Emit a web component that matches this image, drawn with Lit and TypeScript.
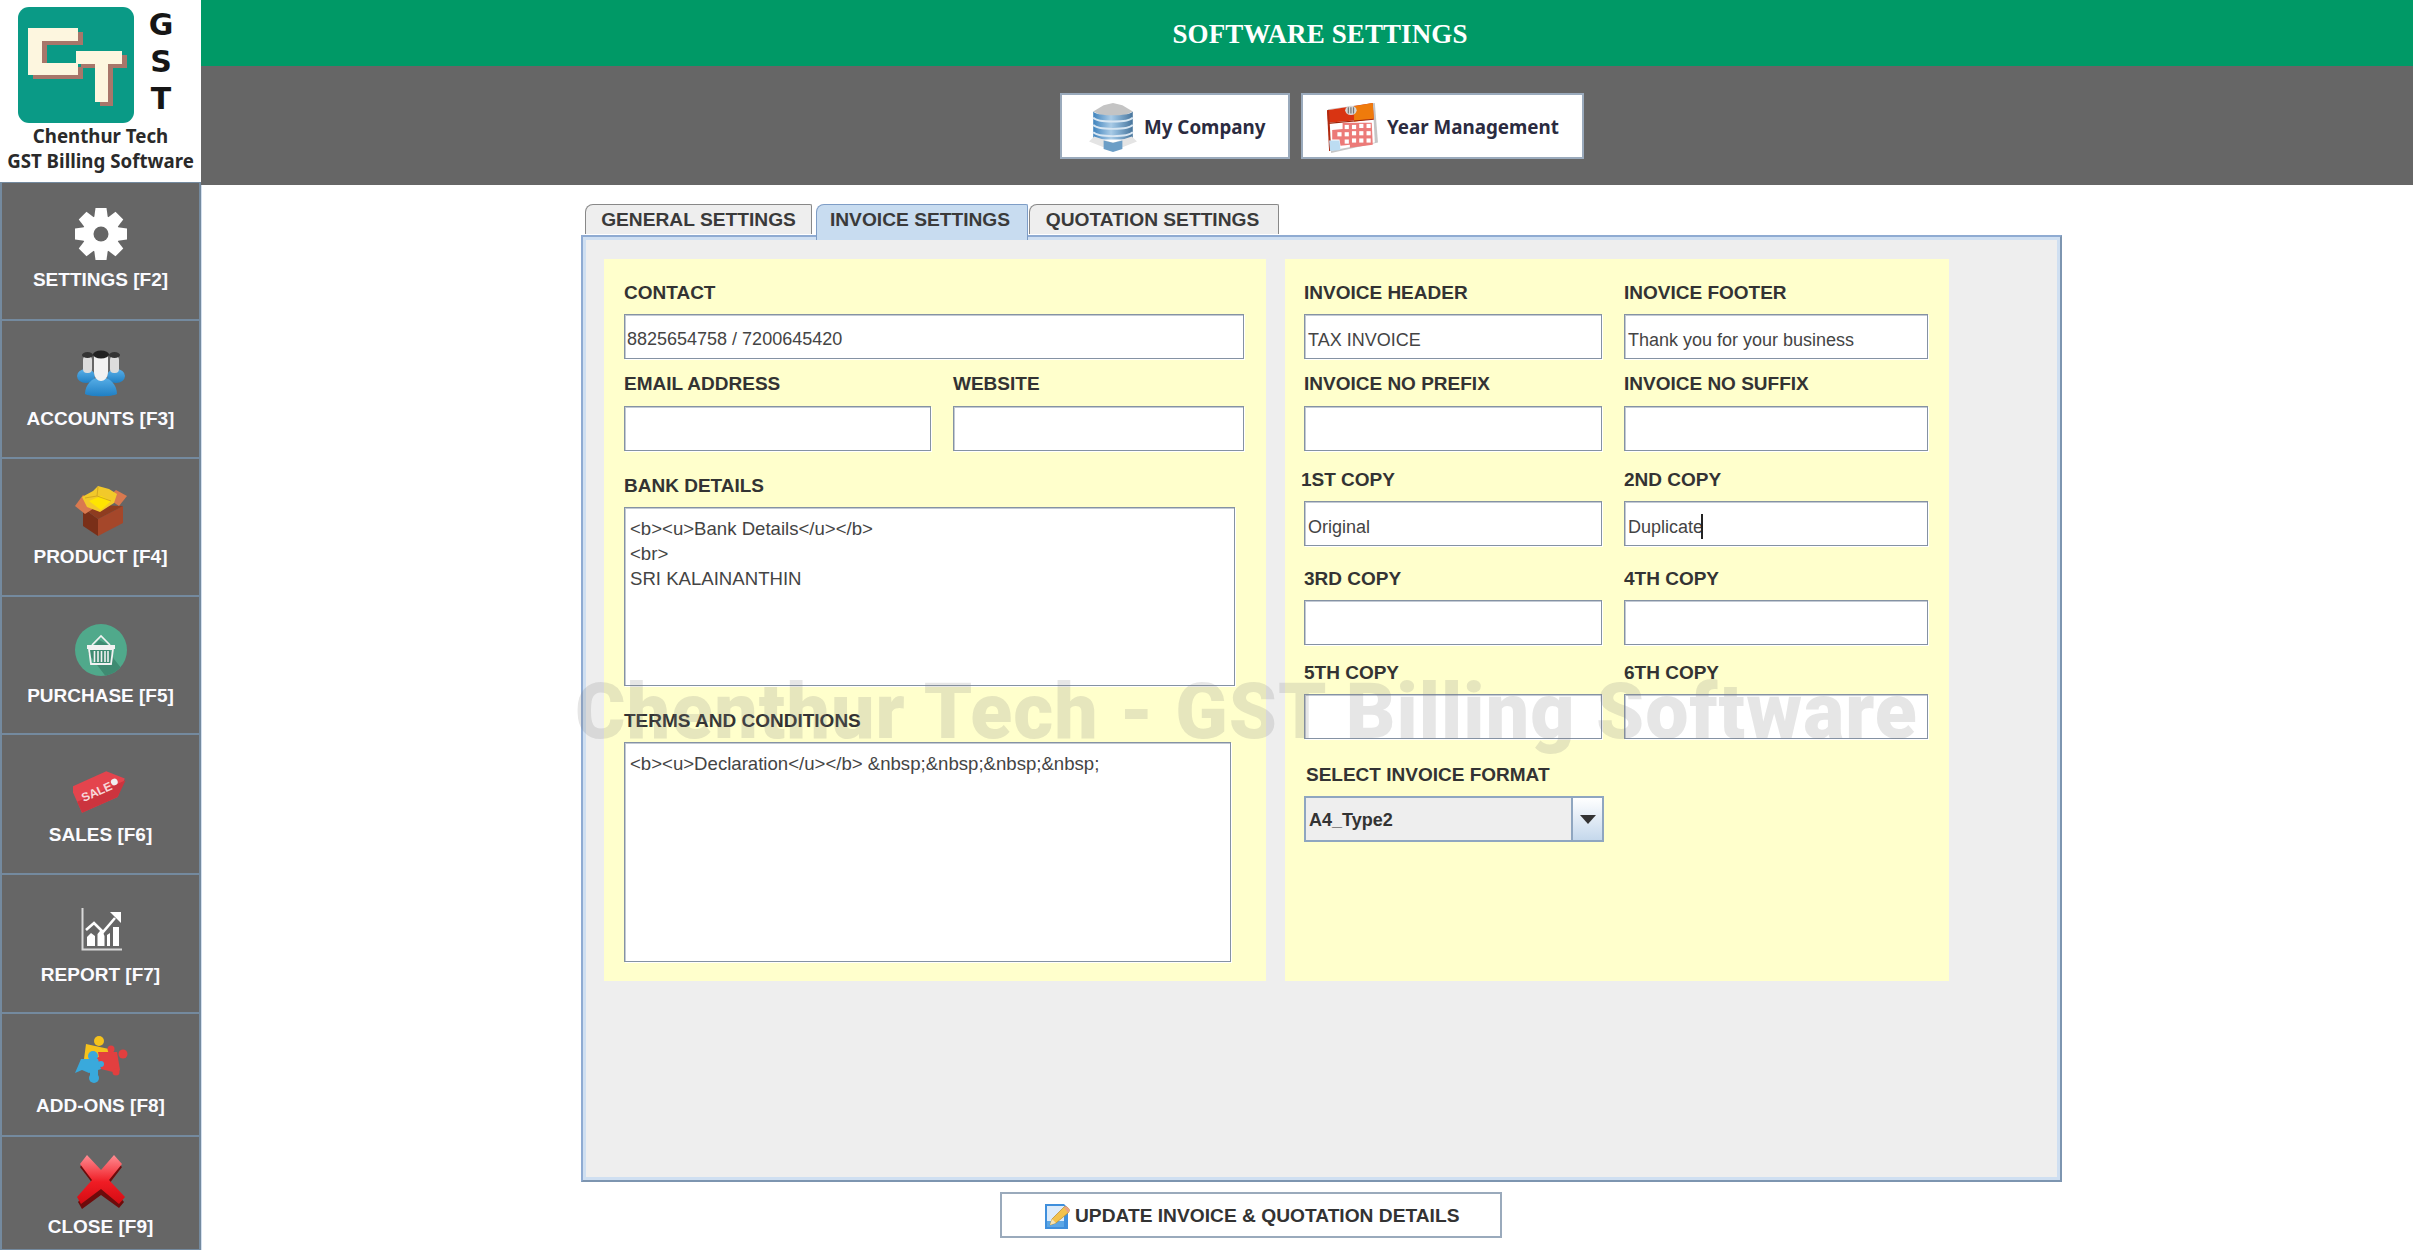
import { LitElement, html, css, svg } from "lit";
import { customElement } from "lit/decorators.js";

const gearTeeth = [0, 45, 90, 135, 180, 225, 270, 315];
const icons: Record<string, unknown> = {
  gear: svg`<g fill="#fff">${gearTeeth.map((a) => svg`<path transform="rotate(${a} 28 28)" d="M22.5 2h11l1.500 11h-14z"/>`)}<circle cx="28" cy="28" r="18.500"/></g><circle cx="28" cy="28" r="7.500" fill="#666"/>`,
  accounts: svg`<defs><linearGradient id="acb" x1="0" y1="0" x2="0" y2="1"><stop offset="0" stop-color="#5ab0e8"/><stop offset="1" stop-color="#1f7fc4"/></linearGradient></defs>
    <ellipse cx="13" cy="31" rx="9" ry="7" fill="url(#acb)"/><ellipse cx="43" cy="31" rx="9" ry="7" fill="url(#acb)"/>
    <rect x="10" y="11" width="9" height="17" rx="4" fill="#dcdcdc"/><rect x="37" y="11" width="9" height="17" rx="4" fill="#dcdcdc"/>
    <ellipse cx="14.500" cy="10" rx="5.500" ry="3" fill="#333"/><ellipse cx="41.500" cy="10" rx="5.500" ry="3" fill="#333"/>
    <path d="M12 49c0-9 7-17 16-17s16 8 16 17c-4 3-28 3-32 0z" fill="url(#acb)"/>
    <path d="M21 11h14v16c0 6-4 9-7 9s-7-3-7-9z" fill="#f2f2f2"/>
    <ellipse cx="28" cy="9.500" rx="8" ry="4" fill="#222"/>`,
  product: svg`<path d="M10 25L25 36 25 53 10 43z" fill="#7a2f18"/><path d="M25 36L50 23 50 40 25 53z" fill="#a5472a"/>
    <path d="M26 22L50 23 25 36 10 25z" fill="#8e3c20"/>
    <path d="M2 23L10 12 26 22 12 31z" fill="#d9794f"/><path d="M34 15L43 7 54 13 46 23z" fill="#d9794f"/>
    <path d="M9 14L20 8 25 3 36 6 44 11 41 20 27 29 14 24z" fill="#f2c92a"/><path d="M16 18L28 13 38 18 28 27z" fill="#ffe500"/>
    <path d="M25 4l-1 9M12 15l12-2 14 5" stroke="#d4a820" stroke-width="1" fill="none"/>`,
  purchase: svg`<clipPath id="pc"><circle cx="28" cy="28" r="26"/></clipPath><circle cx="28" cy="28" r="26" fill="#50a98b"/>
    <path d="M15 31l11-13 8 4 7 15 15 19H34z" fill="#3f8b72" clip-path="url(#pc)"/>
    <path d="M19 23l9-9 9 9" fill="none" stroke="#f2f2f2" stroke-width="1.600"/><path d="M14 23h28v4h-28z" fill="#f2f2f2"/>
    <path d="M16 27h24l-2 15H18z" fill="none" stroke="#f2f2f2" stroke-width="1.800"/><path d="M21.500 29v11M25 29v11M28.500 29v11M32 29v11M35 29v11" stroke="#f2f2f2" stroke-width="1.600"/>`,
  sales: svg`<g transform="rotate(-24 28 28)"><path d="M1 14h39l14 14-14 14H1z" fill="#e4444d"/><path d="M1 30h53l-14 12H1z" fill="#cc343e"/><circle cx="43" cy="27" r="3.400" fill="#efefef"/><text x="7" y="33" class="sale">SALE</text></g>`,
  report: svg`<path d="M9.500 7v41.500H49" fill="none" stroke="#d8d8d8" stroke-width="2"/>
    <path d="M14 45v-9l4-4 4 3v10zM24.500 45V33l4-5 3 7v10zM34 45V34l3-2v13zM40 45V26h6v19z" fill="#fff"/>
    <path d="M13 29l8-7 9 9 12-14" fill="none" stroke="#fff" stroke-width="2.600"/><path d="M37 11h11v11z" fill="#fff"/>`,
  addons: svg`<g fill="#f5c21c"><path d="M11 27L13 12 36 17 32 34 21 30z"/><circle cx="26" cy="9" r="5"/></g>
    <g fill="#e23f3f"><path d="M25 20L44 20 47 38 44 41 28 37z"/><circle cx="50" cy="22" r="4.500"/><circle cx="38" cy="17" r="3.500"/><circle cx="43" cy="40" r="3.500"/><circle cx="25" cy="28" r="3" /></g>
    <g fill="#39a9dc"><path d="M2 41L8 27 25 27 28 37 16 41 9 38z"/><circle cx="20" cy="24" r="5"/><circle cx="21" cy="46" r="5"/><path d="M17 38h8v5h-8z"/><circle cx="28" cy="32" r="3"/></g>`,
  close: svg`<defs><linearGradient id="cx" x1="0" y1="0" x2="0" y2="1"><stop offset="0" stop-color="#ff8d93"/><stop offset=".55" stop-color="#f01c24"/><stop offset="1" stop-color="#d40b12"/></linearGradient></defs>
    <path d="M5 47l15-18L7 12l8-9 13 15L40 3l9 9-13 17 15 18-5 6-18-13-19 14z" fill="#6e0b0b" transform="translate(0 2)"/>
    <path d="M4 44l15-17L7 11l7-9 14 15L41 2l8 9-13 16 16 17-6 7-18-15-20 15z" fill="url(#cx)"/>`,
  building: svg`<defs><linearGradient id="bd" x1="0" y1="0" x2="1" y2="0"><stop offset="0" stop-color="#3f83bd"/><stop offset=".45" stop-color="#a9cbe6"/><stop offset=".6" stop-color="#8ab4d6"/><stop offset="1" stop-color="#47749b"/></linearGradient></defs>
    <path d="M4 9L14 3 23 1 32 3 42 9 32 14 14 14z" fill="#c4c4c4"/><path d="M4 9c4 5 34 5 38 0v27H4z" fill="url(#bd)"/>
    <path d="M4 15c4 5 34 5 38 0M4 22c4 5 34 5 38 0M4 29c4 5 34 5 38 0" stroke="#d8e6f2" stroke-width="1.800" fill="none"/>
    <path d="M0 38l5-5 18 6 18-6 5 5-23 9z" fill="#e4e4e4"/><path d="M14 37l9 2 9-2v8l-9 3-9-3z" fill="#6c9ec6"/>`,
  calendar: svg`<path d="M1 8l45-6 3 38-45 10z" fill="#8c8c8c" opacity=".5"/><path d="M0 9l44-7 2 38L2 48z" fill="#fff"/>
    <path d="M0 9l44-7 1 15L1 21z" fill="#d93412"/><path d="M26 5l18-3 1 15-19 3z" fill="#ef7b0c"/>
    <path d="M1 21l44-4v1L1 22z" fill="#9e2208"/><path d="M0 9L2 48 4 48 2 9z" fill="#b02a10"/>
    <path d="M5 28l10-1v-6h28l1 21-22 3v-3l-9 1-1-6H5z" fill="#ec7a78"/>
    <g fill="#fff"><rect x="17" y="23" width="4" height="4"/><rect x="24" y="23" width="4" height="4"/><rect x="31" y="22" width="4" height="4"/><rect x="38" y="22" width="4" height="4"/><rect x="10" y="30" width="4" height="4"/><rect x="17" y="30" width="4" height="4"/><rect x="24" y="29" width="4" height="4"/><rect x="31" y="29" width="4" height="4"/><rect x="38" y="29" width="4" height="4"/><rect x="17" y="37" width="4" height="4"/><rect x="24" y="36" width="4" height="4"/><rect x="31" y="36" width="4" height="4"/><rect x="38" y="36" width="4" height="4"/></g>
    <path d="M2 38l10 0 1 9-10 1z" fill="#bcdcf2"/>
    <ellipse cx="23" cy="9" rx="5.500" ry="4.500" fill="#d8d8d8"/><path d="M20.500 6v6M23 6v6M25.500 6v6" stroke="#777" stroke-width="1.200"/>`,
  pencil: svg`<path d="M1 1h19l4 4v21H1z" fill="#3f8fdc"/><path d="M3 3h17v21H3z" fill="#dcebfa"/><path d="M3 18h17v6H3z" fill="#5ca7e6"/>
    <path d="M6 22l2-6L20 4c1-1 4 0 5 2 1 1 0 3-1 4L12 20z" fill="#f2c24c" stroke="#b98a2a" stroke-width=".7"/><path d="M6 22l2-6 4 4z" fill="#f5e3b5"/><path d="M20 4c1-1 4 0 5 2 1 1 0 3-1 4z" fill="#e8a088"/>`,
};

const nav = [
  { icon: "gear", label: "SETTINGS [F2]", pad: "p23" },
  { icon: "accounts", label: "ACCOUNTS [F3]", pad: "p24" },
  { icon: "product", label: "PRODUCT [F4]", pad: "p24" },
  { icon: "purchase", label: "PURCHASE [F5]", pad: "p25" },
  { icon: "sales", label: "SALES [F6]", pad: "p26" },
  { icon: "report", label: "REPORT [F7]", pad: "p26" },
  { icon: "addons", label: "ADD-ONS [F8]", pad: "p18" },
  { icon: "close", label: "CLOSE [F9]", pad: "p16" },
];

const rightRows: { label: string; value?: string; caret?: boolean; cls?: string; top: string }[][] = [
  [{ label: "INVOICE HEADER", value: "TAX INVOICE", top: "t0" }, { label: "INOVICE FOOTER", value: "Thank you for your business", top: "t0" }],
  [{ label: "INVOICE NO PREFIX", top: "t14" }, { label: "INVOICE NO SUFFIX", top: "t14" }],
  [{ label: "1ST COPY", value: "Original", cls: "nudge", top: "t18" }, { label: "2ND COPY", value: "Duplicate", caret: true, top: "t18" }],
  [{ label: "3RD COPY", top: "t22" }, { label: "4TH COPY", top: "t22" }],
  [{ label: "5TH COPY", top: "t17" }, { label: "6TH COPY", top: "t17" }],
];

@customElement("app-root")
export class AppRoot extends LitElement {
  static styles = css`
    :host { display: block; position: relative; width: 100%; height: 1250px; overflow: hidden; background: #fff; font-family: "Liberation Sans", Arial, sans-serif; color: #333; }
    .app { display: grid; grid-template-columns: 201px 1fr; height: 100%; }
    .side { display: grid; grid-template-rows: 182px 138px 138px 138px 138px 140px 139px 123px 114px; }
    .logo { position: relative; display: grid; grid-template-columns: 134px 1fr; grid-template-rows: 124px 1fr; background: #fff; }
    .mark { margin: 7px 0 0 18px; width: 116px; height: 116px; }
    .gst { display: flex; flex-direction: column; align-items: center; padding: 6px 0 0 13px; width: 28px; font: 700 30px/37px "DejaVu Sans", sans-serif; color: #161616; }
    .brand { grid-column: 1 / 3; text-align: center; font: 700 18.700px/24.500px "Noto Sans", sans-serif; color: #2a2a2a; }
    .nav { display: flex; flex-direction: column; align-items: center; background: #666; border: 2px solid #748a9f; border-top-width: 1px; border-bottom-width: 1px; color: #fff; box-shadow: 1px 0 0 #d4e0ee; }
    .nav svg { display: block; width: 56px; height: 56px; flex: none; }
    .nav span { margin-top: 7px; font-weight: 700; font-size: 19px; line-height: 22px; white-space: nowrap; color: #fbfbff; }
    .p16 { padding-top: 16px; } .p18 { padding-top: 18px; } .p23 { padding-top: 23px; } .p24 { padding-top: 24px; } .p25 { padding-top: 25px; } .p26 { padding-top: 26px; }
    .sale { font: 700 12px "Liberation Sans", sans-serif; fill: #f7d8da; }
    .main { display: flex; flex-direction: column; min-width: 0; }
    .title { height: 66px; box-sizing: border-box; padding: 3px 0 0 26px; background: #009966; display: flex; align-items: center; justify-content: center; color: #fff; font: 700 27px "Liberation Serif", serif; letter-spacing: 0.100px; }
    .bar { height: 119px; background: #666; display: flex; justify-content: center; gap: 11px; padding: 27px 0 0 30px; box-sizing: border-box; }
    .tbtn { height: 66px; box-sizing: border-box; padding-top: 2px; background: #fff; border: 2px solid #9aaabc; display: flex; align-items: center; font: 700 18.800px "Noto Sans", sans-serif; color: #2b2b40; }
    .b1 { width: 230px; padding-left: 27px; gap: 7px; } .b2 { width: 283px; padding-left: 24px; gap: 8px; }
    .b1 svg { width: 48px; height: 50px; } .b2 svg { width: 52px; height: 52px; }
    .content { flex: 1; padding: 19px 0 0 380px; position: relative; }
    .tabs { display: flex; height: 31px; padding-left: 4px; position: relative; z-index: 1; }
    .tab { box-sizing: border-box; height: 30px; background: #eeeeee; border: 1px solid #888; border-bottom: 0; border-radius: 8px 2px 0 0; display: flex; align-items: center; justify-content: center; font-weight: 700; font-size: 19.200px; color: #3a3a3a; }
    .tab.g { width: 227px; } .tab.i { width: 212px; margin-left: 4px; height: 36px; background: #c8dcf0; border-color: #7e9dc6; padding: 0 4px 6px 0; } .tab.q { width: 250px; margin-left: 1px; padding-right: 3px; }
    .panel { width: 1481px; height: 947px; box-sizing: border-box; background: #eeeeee; border: 2px solid #8fabd2; border-right-color: #7d95b0; border-bottom-color: #7d95b0; box-shadow: inset 0 0 0 3px #cfdff1; padding: 22px 0 0 21px; display: flex; gap: 19px; align-items: flex-start; }
    .yellow { height: 722px; box-sizing: border-box; background: #ffffcc; padding: 23px 0 0 20px; }
    .left { width: 662px; }
    .right { width: 664px; padding-left: 19px; }
    .field { display: flex; flex-direction: column; }
    .lab { height: 22px; line-height: 22px; font-weight: 700; font-size: 19px; color: #333; white-space: nowrap; }
    .box { box-sizing: border-box; height: 45px; margin-top: 10px; background: #fff; border: 1px solid #8592a3; box-shadow: inset 1px 1px 0 #c3cad4, 1px 1px 0 #fff; font-size: 18px; line-height: 22px; color: #444; display: flex; align-items: center; padding: 5px 0 0 2px; white-space: pre; }
    .row { display: flex; gap: 22px; }
    .t0 { margin-top: 0; } .t14 { margin-top: 14px; } .t17 { margin-top: 17px; } .t18 { margin-top: 18px; } .t22 { margin-top: 22px; } .t24 { margin-top: 24px; } .t25 { margin-top: 25px; }
    .w620 { width: 620px; } .w306 { width: 307px; } .w292 { width: 291px; }
    .mail .box { margin-top: 11px; }
    .area { box-sizing: border-box; margin-top: 10px; background: #fff; border: 1px solid #8592a3; box-shadow: inset 1px 1px 0 #c3cad4, 1px 1px 0 #fff; font-size: 18.600px; line-height: 25px; color: #444; padding: 8px 0 0 5px; white-space: pre; }
    .a1 { width: 611px; height: 179px; } .a2 { width: 607px; height: 220px; }
    .c1 { width: 298px; } .c2 { width: 304px; }
    .right .box { padding: 6px 0 0 3px; }
    .nudge .lab { margin-left: -3px; }
    .r2 .box { margin-top: 11px; }
    .caret { display: inline-block; width: 2px; height: 25px; background: #222; margin-left: -2px; align-self: center; }
    .combo { box-sizing: border-box; width: 300px; height: 46px; margin-top: 10px; display: flex; background: #eeeeee; border: 2px solid #8fa6c0; }
    .cval { flex: 1; font-weight: 700; font-size: 18px; color: #333; display: flex; align-items: center; padding: 3px 0 0 3px; border-right: 2px solid #8fa6c0; }
    .cbtn { width: 29px; background: linear-gradient(#ffffff, #c5d8ec); display: flex; align-items: center; justify-content: center; }
    .tri { width: 0; height: 0; border-left: 8px solid transparent; border-right: 8px solid transparent; border-top: 9px solid #333; }
    .sellab { margin-left: 2px; }
    .foot { display: flex; margin: 10px 0 0 419px; }
    .update { box-sizing: border-box; width: 502px; height: 46px; background: #fff; border: 2px solid #9aaabc; display: flex; align-items: center; padding: 2px 0 0 42px; gap: 5px; font-weight: 700; font-size: 19.200px; color: #333; white-space: nowrap; }
    .update svg { width: 26px; height: 27px; flex: none; }
    .wm { position: absolute; left: 575px; top: 668px; font-family: Roboto, sans-serif; font-weight: 900; font-size: 77px; letter-spacing: 1.100px; line-height: 88px; color: rgba(128, 128, 128, 0.2); white-space: nowrap; pointer-events: none; z-index: 5; }
  `;

  private field(f: { label: string; value?: string; caret?: boolean; cls?: string; top: string }, col: string) {
    return html`<div class="field ${col} ${f.cls ?? ""}">
      <div class="lab">${f.label}</div>
      <div class="box">${f.value ?? ""}${f.caret ? html`<i class="caret"></i>` : ""}</div>
    </div>`;
  }

  render() {
    return html`
      <div class="app">
        <aside class="side">
          <div class="logo">
            <svg class="mark" viewBox="0 0 116 116">
              <rect width="116" height="116" rx="11" fill="#0a9a86"/>
              <g fill="#a8766a"><rect x="15" y="25" width="50" height="13"/><rect x="15" y="25" width="14" height="47"/><rect x="15" y="60" width="50" height="12"/><rect x="63" y="48" width="46" height="13"/><rect x="82" y="48" width="13" height="51"/></g>
              <g fill="#fdf6df"><rect x="10" y="21" width="50" height="13"/><rect x="10" y="21" width="14" height="47"/><rect x="10" y="56" width="50" height="12"/><rect x="58" y="44" width="46" height="13"/><rect x="77" y="44" width="13" height="51"/></g>
            </svg>
            <div class="gst"><span>G</span><span>S</span><span>T</span></div>
            <div class="brand">Chenthur Tech<br />GST Billing Software</div>
          </div>
          ${nav.map((n) => html`<div class="nav ${n.pad}"><svg viewBox="0 0 56 56">${icons[n.icon]}</svg><span>${n.label}</span></div>`)}
        </aside>
        <main class="main">
          <div class="title">SOFTWARE SETTINGS</div>
          <div class="bar">
            <div class="tbtn b1"><svg viewBox="0 0 46 48">${icons.building}</svg>My Company</div>
            <div class="tbtn b2"><svg viewBox="0 0 50 50">${icons.calendar}</svg>Year Management</div>
          </div>
          <div class="content">
            <div class="tabs">
              <div class="tab g">GENERAL SETTINGS</div>
              <div class="tab i">INVOICE SETTINGS</div>
              <div class="tab q">QUOTATION SETTINGS</div>
            </div>
            <div class="panel">
              <section class="yellow left">
                <div class="field w620"><div class="lab">CONTACT</div><div class="box">8825654758 / 7200645420</div></div>
                <div class="row mail t14">
                  <div class="field w306"><div class="lab">EMAIL ADDRESS</div><div class="box"></div></div>
                  <div class="field w292"><div class="lab">WEBSITE</div><div class="box"></div></div>
                </div>
                <div class="field t24"><div class="lab">BANK DETAILS</div><div class="area a1">&lt;b&gt;&lt;u&gt;Bank Details&lt;/u&gt;&lt;/b&gt;
&lt;br&gt;
SRI KALAINANTHIN</div></div>
                <div class="field t24"><div class="lab">TERMS AND CONDITIONS</div><div class="area a2">&lt;b&gt;&lt;u&gt;Declaration&lt;/u&gt;&lt;/b&gt; &amp;nbsp;&amp;nbsp;&amp;nbsp;&amp;nbsp;</div></div>
              </section>
              <section class="yellow right">
                ${rightRows.map((r, i) => html`<div class="row ${r[0].top} ${i === 1 ? "r2" : ""}">${this.field(r[0], "c1")}${this.field(r[1], "c2")}</div>`)}
                <div class="field t25"><div class="lab sellab">SELECT INVOICE FORMAT</div>
                  <div class="combo"><div class="cval">A4_Type2</div><div class="cbtn"><div class="tri"></div></div></div>
                </div>
              </section>
            </div>
            <div class="foot">
              <div class="update"><svg viewBox="0 0 26 27">${icons.pencil}</svg>UPDATE INVOICE &amp; QUOTATION DETAILS</div>
            </div>
          </div>
        </main>
      </div>
      <div class="wm">Chenthur Tech - GST Billing Software</div>
    `;
  }
}
